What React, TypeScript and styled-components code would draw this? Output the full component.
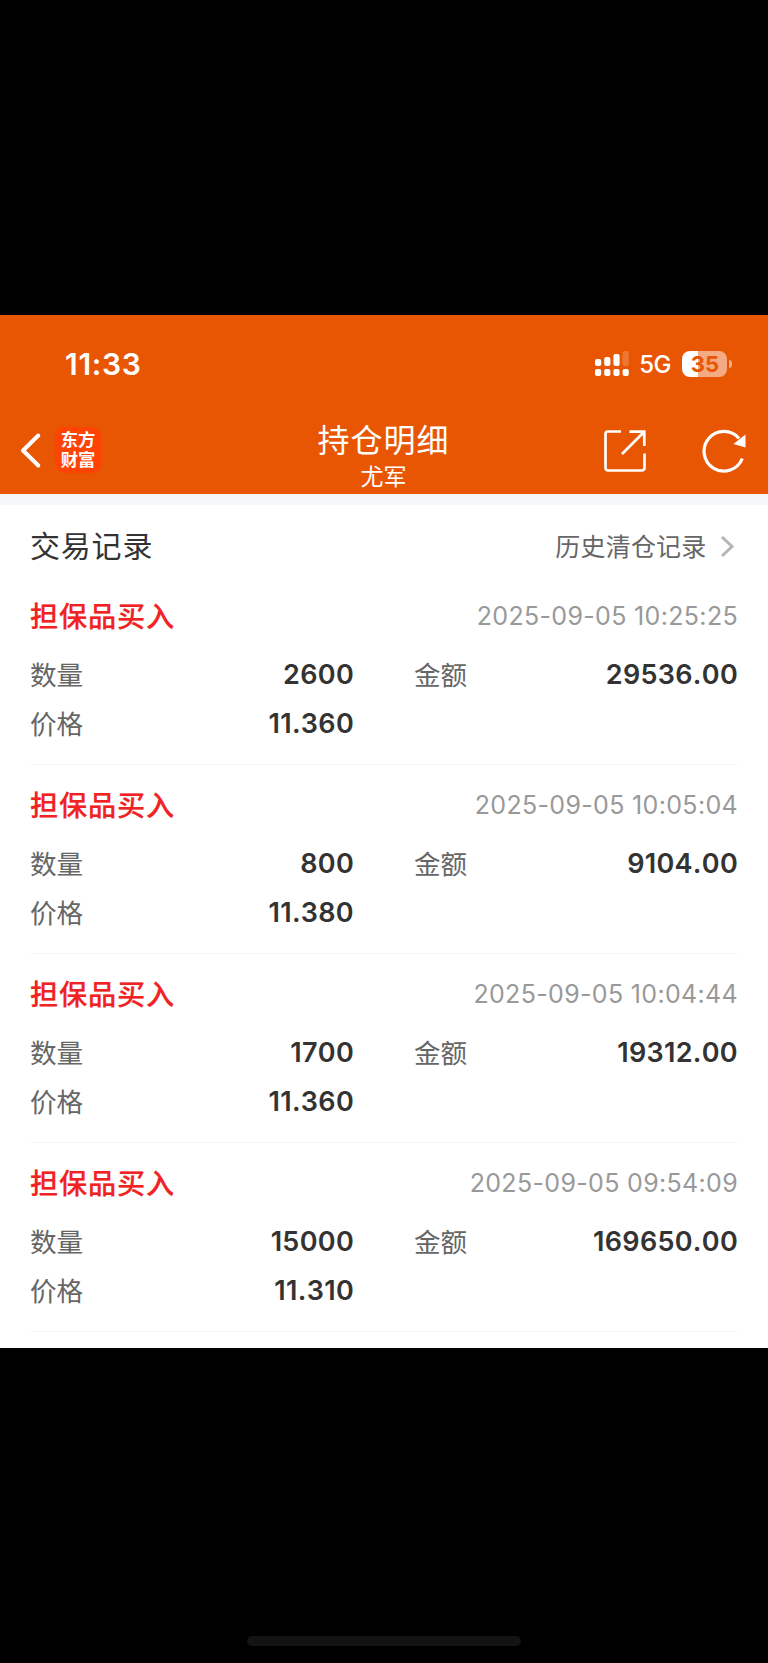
import React from "react";
import styled, { createGlobalStyle } from "styled-components";

const GlobalStyle = createGlobalStyle`
  * { box-sizing: border-box; }
  body {
    margin: 0;
    background: #000;
    font-family: Inter, "Noto Sans CJK SC", sans-serif;
  }
`;

const Screen = styled.div`
  display: flex;
  flex-direction: column;
  width: 768px;
  height: 1663px;
  background: #000;
  padding-top: 315px;
  overflow: hidden;
`;

const Header = styled.header`
  height: 179px;
  flex: none;
  background: #e85604;
  color: #fff;
`;

const StatusBar = styled.div`
  display: flex;
  justify-content: space-between;
  align-items: center;
  height: 97px;
  padding: 0 36px 0 65px;
`;

const Clock = styled.span`
  font-size: 30px;
  font-weight: 600;
  line-height: 36px;
  letter-spacing: 0.7px;
`;

const StatusIcons = styled.div`
  display: flex;
  align-items: center;
`;

const Network = styled.span`
  margin: 2px 11px 0 10px;
  font-size: 24px;
  font-weight: 450;
  line-height: 28px;
  letter-spacing: -0.5px;
`;

const Battery = styled.div`
  width: 45px;
  height: 26px;
  padding-left: 1px;
  border-radius: 8px;
  background: linear-gradient(to right, #fff 16px, #f4aa82 16px);
  color: #e85604;
  font-size: 22px;
  font-weight: 650;
  line-height: 26px;
  text-align: center;
`;

const BatteryCap = styled.div`
  width: 3px;
  height: 8px;
  margin-left: 2px;
  border-radius: 0 4px 4px 0;
  background: #f4aa82;
`;

const NavBar = styled.nav`
  display: grid;
  grid-template-columns: 1fr auto 1fr;
  height: 82px;
  padding: 0 22px 0 20px;
`;

const NavSide = styled.div<{ $end?: boolean }>`
  display: flex;
  align-items: center;
  justify-content: ${(p) => (p.$end ? "flex-end" : "flex-start")};
  gap: ${(p) => (p.$end ? "56px" : "13px")};
  height: 78px;
`;

const Logo = styled.div`
  display: flex;
  flex-direction: column;
  align-items: center;
  width: 46px;
  height: 46px;
  margin-bottom: 2px;
  padding-top: 3px;
  border-radius: 9px;
  background: #ff4304;
  font-size: 17.3px;
  font-weight: 700;
  line-height: 19.5px;
`;

const NavTitle = styled.div`
  display: flex;
  flex-direction: column;
  align-items: center;
  padding: 9px 0 0 1px;
`;

const Title = styled.h1`
  margin: 0;
  font-size: 32px;
  font-weight: 400;
  line-height: 40px;
  letter-spacing: 1px;
`;

const Account = styled.span`
  font-size: 23px;
  line-height: 32px;
`;

const Content = styled.main`
  height: 854px;
  flex: none;
  border-top: 11px solid #f5f6fa;
  background: #fff;
  padding: 0 30px;
`;

const SectionHead = styled.div`
  display: flex;
  align-items: center;
  justify-content: space-between;
  height: 71px;
  padding-top: 11px;
`;

const SectionTitle = styled.h2`
  margin: 0;
  color: #333;
  font-size: 30px;
  font-weight: 400;
  line-height: 40px;
  letter-spacing: 0.8px;
`;

const HistoryLink = styled.a`
  display: flex;
  align-items: center;
  gap: 13.5px;
  padding: 1px 4px 0 0;
  color: #666;
  font-size: 25px;
  line-height: 34px;
  letter-spacing: 0.2px;
`;

const Record = styled.article`
  height: 189px;
  padding-top: 24px;
  border-bottom: 1px solid #f5f5f5;
`;

const RecordHead = styled.div`
  display: flex;
  align-items: center;
  justify-content: space-between;
  height: 32px;
  margin-bottom: 18px;
`;

const Kind = styled.span`
  padding-bottom: 4px;
  color: #f12223;
  font-size: 28.2px;
  font-weight: 500;
  letter-spacing: 0.8px;
  -webkit-text-stroke: 0.2px #f12223;
`;

const Time = styled.time`
  color: #999;
  font-size: 25px;
  letter-spacing: 0.33px;
`;

const Fields = styled.div`
  display: grid;
  grid-template-columns: 324px 324px;
  column-gap: 60px;
  grid-auto-rows: 49px;
`;

const Field = styled.div`
  display: flex;
  align-items: center;
  justify-content: space-between;
`;

const Label = styled.span`
  padding-bottom: 2px;
  color: #666;
  font-size: 26.6px;
`;

const Value = styled.span`
  color: #333;
  font-size: 27px;
  font-weight: 600;
  font-kerning: none;
  letter-spacing: 0.3px;
`;

const HomeIndicator = styled.div`
  width: 274px;
  height: 10px;
  margin: auto auto 17px 247px;
  border-radius: 5px;
  background: #131313;
`;

const records = [
  { time: "2025-09-05 10:25:25", quantity: "2600", amount: "29536.00", price: "11.360" },
  { time: "2025-09-05 10:05:04", quantity: "800", amount: "9104.00", price: "11.380" },
  { time: "2025-09-05 10:04:44", quantity: "1700", amount: "19312.00", price: "11.360" },
  { time: "2025-09-05 09:54:09", quantity: "15000", amount: "169650.00", price: "11.310" },
];

const SignalIcon = () => (
  <svg width="34" height="26" viewBox="0 0 34 26" fill="#fff">
    <rect x="0" y="8" width="6.2" height="7" rx="2" />
    <rect x="9.2" y="6" width="6.2" height="9" rx="2" />
    <rect x="18.4" y="3" width="6.2" height="12" rx="2" />
    <rect x="27.6" y="0" width="6.2" height="15" rx="2" opacity="0.2" />
    {[0, 9.2, 18.4, 27.6].map((x) => (
      <rect key={x} x={x} y="18" width="6.2" height="7" rx="2" />
    ))}
  </svg>
);

const BackIcon = () => (
  <svg width="22" height="38" viewBox="0 0 22 38" fill="none" stroke="#fff" strokeWidth="4" strokeLinecap="round" strokeLinejoin="round">
    <path d="M18.300 3.500L3 18.500l15.300 15" />
  </svg>
);

const ShareIcon = () => (
  <svg width="42" height="42" viewBox="0 0 42 42" fill="none" stroke="#fff" strokeWidth="2.7">
    <path d="M17 1.500H4A2.500 2.500 0 0 0 1.500 4V38A2.500 2.500 0 0 0 4 40.500H38A2.500 2.500 0 0 0 40.500 38V23.500" />
    <path d="M25.500 1.700H40.300V16M39.500 2.500L18 24" />
  </svg>
);

const RefreshIcon = () => (
  <svg width="44" height="44" viewBox="0 0 44 44" fill="none">
    <path d="M40.300 29.500A19.800 19.800 0 1 1 37 9.500" stroke="#fff" strokeWidth="3.2" />
    <path d="M43.500 5.500V18.500L31.500 15z" fill="#fff" />
  </svg>
);

const ArrowIcon = () => (
  <svg width="14" height="24" viewBox="0 0 14 24" fill="none" stroke="#b5b5b5" strokeWidth="3">
    <path d="M2 2l10 9.500L2 21" />
  </svg>
);

export default function App() {
  return (
    <Screen>
      <GlobalStyle />
      <Header>
        <StatusBar>
          <Clock>11:33</Clock>
          <StatusIcons>
            <SignalIcon />
            <Network>5G</Network>
            <Battery>35</Battery>
            <BatteryCap />
          </StatusIcons>
        </StatusBar>
        <NavBar>
          <NavSide>
            <BackIcon />
            <Logo>
              <span>东方</span>
              <span>财富</span>
            </Logo>
          </NavSide>
          <NavTitle>
            <Title>持仓明细</Title>
            <Account>尤军</Account>
          </NavTitle>
          <NavSide $end>
            <ShareIcon />
            <RefreshIcon />
          </NavSide>
        </NavBar>
      </Header>
      <Content>
        <SectionHead>
          <SectionTitle>交易记录</SectionTitle>
          <HistoryLink>
            历史清仓记录
            <ArrowIcon />
          </HistoryLink>
        </SectionHead>
        {records.map((r) => (
          <Record key={r.time}>
            <RecordHead>
              <Kind>担保品买入</Kind>
              <Time>{r.time}</Time>
            </RecordHead>
            <Fields>
              <Field>
                <Label>数量</Label>
                <Value>{r.quantity}</Value>
              </Field>
              <Field>
                <Label>金额</Label>
                <Value>{r.amount}</Value>
              </Field>
              <Field>
                <Label>价格</Label>
                <Value>{r.price}</Value>
              </Field>
            </Fields>
          </Record>
        ))}
      </Content>
      <HomeIndicator />
    </Screen>
  );
}
